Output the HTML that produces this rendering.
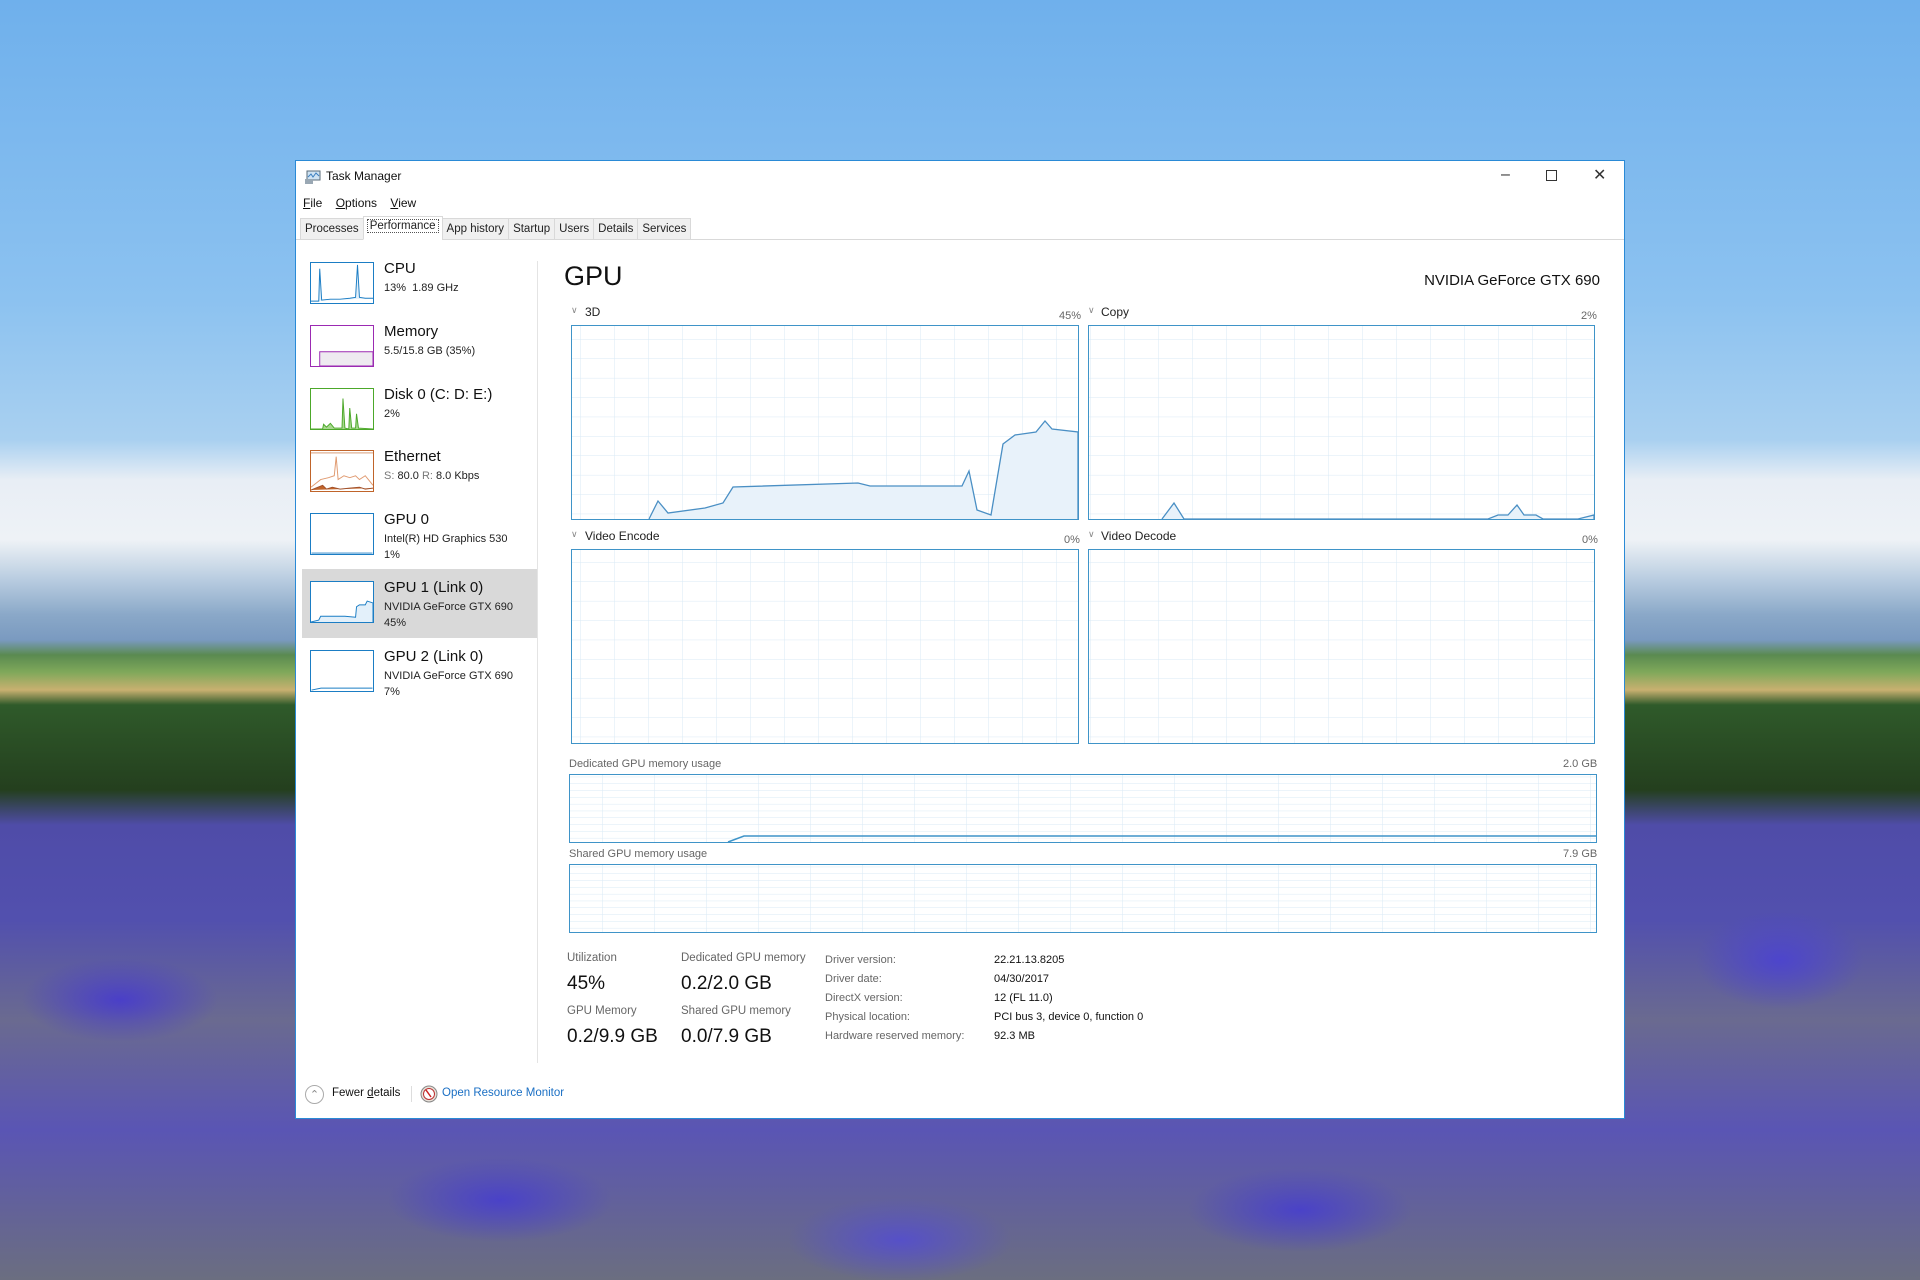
<!DOCTYPE html>
<html><head><meta charset="utf-8"><style>
*{margin:0;padding:0;box-sizing:border-box}
body{width:1920px;height:1280px;overflow:hidden;position:relative;font-family:"Liberation Sans",sans-serif;color:#000;
background:
radial-gradient(ellipse 140px 60px at 120px 1000px,#4a3fc8 0%,transparent 70%),
radial-gradient(ellipse 120px 70px at 1780px 960px,#4d45cc 0%,transparent 70%),
radial-gradient(ellipse 160px 60px at 500px 1200px,#4a42c8 0%,transparent 70%),
radial-gradient(ellipse 160px 60px at 1300px 1210px,#4a42c8 0%,transparent 70%),
radial-gradient(ellipse 160px 60px at 900px 1240px,#5650c8 0%,transparent 70%),
linear-gradient(180deg,#6fb0ec 0px,#8cc2f0 300px,#a9d0f0 440px,#e8eef5 480px,#eef2f6 540px,#b8cce0 580px,#8aa8c8 615px,#7a9ac0 640px,#5a8a50 655px,#7fa85a 672px,#c8b070 690px,#2f5a2a 705px,#243f1e 790px,#4f4ca8 825px,#5250ae 920px,#6a6a90 1020px,#5a55b4 1130px,#6b6e80 1280px);}
.win{position:absolute;left:295px;top:160px;width:1330px;height:959px;background:#fff;border:1px solid #2a8ad6;}
.t{position:absolute;white-space:nowrap}
.tabs{position:absolute;left:4px;top:55px;height:24px;display:flex;font-size:11.5px}
.tab{border:1px solid #d9d9d9;background:#f0f0f0;padding:4px 4px 0;height:22px;margin-top:2px;margin-right:-1px;color:#222}
.tab.sel{background:#fff;height:24px;margin-top:0;border-color:#d9d9d9;border-bottom-color:#fff;padding-top:3px}
.tab.sel span{outline:1px dotted #555;padding:0 2px}
.item{position:absolute;left:10px;width:234px;height:64px}
.thumb{position:absolute;left:4px;top:0;width:64px;height:42px;border:1px solid}
.item .n{position:absolute;left:78px;top:-2px;font-size:15px;color:#111}
.item .d{position:absolute;left:78px;font-size:11px;color:#222;line-height:16px}
.lbl{font-size:12.5px;color:#555}
.sm{font-size:11px;color:#666}
.big{font-size:19px;color:#111}
.info{font-size:11px;color:#666;line-height:19px}
.infov{font-size:11px;color:#111;line-height:19px}
</style></head><body>
<div class="win">
 <svg class="t" style="left:8px;top:8px" width="18" height="16" viewBox="0 0 18 16"><rect x="3" y="2" width="13" height="9" fill="#cfe3f3" stroke="#5a6b7a"/><polyline points="4,8 7,5 9,8 12,4 15,7" fill="none" stroke="#3b7fc0"/><rect x="1" y="10" width="8" height="5" fill="#9aa8b4"/></svg>
 <div class="t" style="left:30px;top:8px;font-size:12px;color:#111">Task Manager</div>
 <div class="t" style="left:1205px;top:5px;font-size:16px;color:#333">&#8211;</div>
 <div class="t" style="left:1250px;top:9px;width:11px;height:11px;border:1px solid #333"></div>
 <div class="t" style="left:1297px;top:4px;font-size:16px;color:#333">&#10005;</div>
 <div class="t" style="left:7px;top:35px;font-size:12px;color:#111"><u>F</u>ile &nbsp;&nbsp;&nbsp;<u>O</u>ptions &nbsp;&nbsp;&nbsp;<u>V</u>iew</div>
 <div class="t" style="left:0;top:78px;width:1328px;height:1px;background:#d9d9d9"></div>
 <div class="tabs">
  <div class="tab">Processes</div><div class="tab sel"><span>Performance</span></div><div class="tab">App history</div><div class="tab">Startup</div><div class="tab">Users</div><div class="tab">Details</div><div class="tab">Services</div>
 </div>
 <div class="t" style="left:6px;top:408px;width:235px;height:69px;background:#d9d9d9"></div>
 <div class="item" style="top:101px">
  <svg class="thumb" style="border-color:#1b7dc4" viewBox="0 0 64 42" preserveAspectRatio="none"><polyline points="0,40 8,40 9,6 11,39 20,38 30,38 40,37 46,36 48,2 50,36 56,37 64,37" fill="#e3f0fa" stroke="#1b7dc4"/></svg>
  <div class="n">CPU</div><div class="d" style="top:18px">13%&nbsp; 1.89 GHz</div></div>
 <div class="item" style="top:164px">
  <svg class="thumb" style="border-color:#9b2ab2" viewBox="0 0 64 42" preserveAspectRatio="none"><polygon points="9,42 9,27 64,27 64,42" fill="#eeeaf0" stroke="#9b2ab2"/></svg>
  <div class="n">Memory</div><div class="d" style="top:18px">5.5/15.8 GB (35%)</div></div>
 <div class="item" style="top:227px">
  <svg class="thumb" style="border-color:#4ca82a" viewBox="0 0 64 42" preserveAspectRatio="none"><polyline points="0,42 12,42 13,37 16,40 20,36 24,41 32,41 33,10 35,41 39,42 40,20 42,41 46,41 47,26 49,41 64,42" fill="#a8d88f" stroke="#4ca82a"/></svg>
  <div class="n">Disk 0 (C: D: E:)</div><div class="d" style="top:18px">2%</div></div>
 <div class="item" style="top:289px">
  <svg class="thumb" style="border-color:#c0642a" viewBox="0 0 64 42" preserveAspectRatio="none"><line x1="0" y1="2" x2="64" y2="2" stroke="#c0642a" stroke-width=".6"/><polyline points="0,38 10,30 18,28 24,26 26,6 28,30 34,26 40,28 46,26 50,30 56,26 64,36" fill="none" stroke="#e09a70"/><polyline points="0,41 12,36 16,40 22,38 30,40 40,39 50,38 56,40 64,39" fill="#c0642a" stroke="#a0502a"/></svg>
  <div class="n">Ethernet</div><div class="d" style="top:18px"><span style="color:#777">S:</span> 80.0 <span style="color:#777">R:</span> 8.0 Kbps</div></div>
 <div class="item" style="top:352px">
  <svg class="thumb" style="border-color:#1b7dc4" viewBox="0 0 64 42"><polyline points="0,41 64,41" stroke="#1b7dc4"/></svg>
  <div class="n">GPU 0</div><div class="d" style="top:18px">Intel(R) HD Graphics 530<br>1%</div></div>
 <div class="item" style="top:420px">
  <svg class="thumb" style="border-color:#1b7dc4;background:#fff" viewBox="0 0 64 42" preserveAspectRatio="none"><polyline points="0,42 8,40 10,36 20,36 35,36 46,37 47,26 50,24 56,24 58,20 64,22 64,42" fill="#e3f0fa" stroke="#1b7dc4"/></svg>
  <div class="n">GPU 1 (Link 0)</div><div class="d" style="top:18px">NVIDIA GeForce GTX 690<br>45%</div></div>
 <div class="item" style="top:489px">
  <svg class="thumb" style="border-color:#1b7dc4" viewBox="0 0 64 42"><polyline points="0,41 10,39 30,39 50,39 64,39" fill="none" stroke="#1b7dc4"/></svg>
  <div class="n">GPU 2 (Link 0)</div><div class="d" style="top:18px">NVIDIA GeForce GTX 690<br>7%</div></div>
 <div class="t" style="left:241px;top:100px;width:1px;height:802px;background:#e4e4e4"></div>

 <div class="t" style="left:268px;top:100px;font-size:27px;color:#111">GPU</div>
 <div class="t" style="right:24px;top:111px;font-size:15px;color:#111">NVIDIA GeForce GTX 690</div>

 <svg class="t" style="left:0;top:0;overflow:visible" width="1328" height="950">
  <defs>
   <pattern id="g" x="274" y="164" width="34" height="19.4" patternUnits="userSpaceOnUse"><path d="M34 0V19.4M0 19.4H34" fill="none" stroke="#d9eaf5" stroke-width="1"/></pattern>
   <pattern id="g2" x="274" y="387" width="34" height="19.4" patternUnits="userSpaceOnUse"><path d="M34 0V19.4M0 19.4H34" fill="none" stroke="#d9eaf5" stroke-width="1"/></pattern>
   <pattern id="m" x="290" y="613" width="52" height="6.8" patternUnits="userSpaceOnUse"><path d="M52 0V6.8M0 6.8H52" fill="none" stroke="#d9eaf5" stroke-width="1"/></pattern>
   <pattern id="m2" x="290" y="703" width="52" height="6.8" patternUnits="userSpaceOnUse"><path d="M52 0V6.8M0 6.8H52" fill="none" stroke="#d9eaf5" stroke-width="1"/></pattern>
  </defs>
  <g transform="translate(-295,-160)">
   <rect x="570.5" y="324.5" width="507" height="194" fill="url(#g)" stroke="#3f94c8"/>
   <rect x="1087.5" y="324.5" width="506" height="194" fill="url(#g)" stroke="#3f94c8"/>
   <rect x="570.5" y="548.5" width="507" height="194" fill="url(#g2)" stroke="#3f94c8"/>
   <rect x="1087.5" y="548.5" width="506" height="194" fill="url(#g2)" stroke="#3f94c8"/>
   <rect x="568.5" y="773.5" width="1027" height="68" fill="url(#m)" stroke="#3f94c8"/>
   <rect x="568.5" y="863.5" width="1027" height="68" fill="url(#m2)" stroke="#3f94c8"/>
   <g transform="translate(570,324)">
    <polyline points="78,194 87,176 97,188 134,183 152,178 162,162 287,158 299,161 391,161 398,146 406,185 420,190 432,119 444,110 465,107 474,96 481,104 507,107 507,194" fill="#e8f2fa" stroke="#4a8fc4" stroke-width="1.3"/>
   </g>
   <g transform="translate(1087,324)">
    <polyline points="74,194 86,178 96,194 400,194 410,190 420,190 429,180 436,190 448,190 455,194 490,194 506,190 506,194" fill="#e8f2fa" stroke="#4a8fc4" stroke-width="1.3"/>
   </g>
   <polyline points="727,841 743,835 1595,835" fill="none" stroke="#3f94c8" stroke-width="1.5"/>
  </g>
 </svg>

 <div class="t" style="left:275px;top:144px;font-size:9px;color:#888">&#8744;</div>
 <div class="t" style="left:289px;top:144px;font-size:12px;color:#222">3D</div>
 <div class="t" style="left:763px;top:145px" ><span class="sm">45%</span></div>
 <div class="t" style="left:792px;top:144px;font-size:9px;color:#888">&#8744;</div>
 <div class="t" style="left:805px;top:144px;font-size:12px;color:#222">Copy</div>
 <div class="t" style="left:1285px;top:145px"><span class="sm">2%</span></div>
 <div class="t" style="left:275px;top:368px;font-size:9px;color:#888">&#8744;</div>
 <div class="t" style="left:289px;top:368px;font-size:12px;color:#222">Video Encode</div>
 <div class="t" style="left:768px;top:369px"><span class="sm">0%</span></div>
 <div class="t" style="left:792px;top:368px;font-size:9px;color:#888">&#8744;</div>
 <div class="t" style="left:805px;top:368px;font-size:12px;color:#222">Video Decode</div>
 <div class="t" style="left:1286px;top:369px"><span class="sm">0%</span></div>
 <div class="t sm" style="left:273px;top:597px">Dedicated GPU memory usage</div>
 <div class="t sm" style="left:1267px;top:597px">2.0 GB</div>
 <div class="t sm" style="left:273px;top:687px">Shared GPU memory usage</div>
 <div class="t sm" style="left:1267px;top:687px">7.9 GB</div>

 <div class="t" style="left:271px;top:791px;font-size:11.5px;color:#666">Utilization</div>
 <div class="t big" style="left:271px;top:812px">45%</div>
 <div class="t" style="left:271px;top:844px;font-size:11.5px;color:#666">GPU Memory</div>
 <div class="t big" style="left:271px;top:865px">0.2/9.9 GB</div>
 <div class="t" style="left:385px;top:791px;font-size:11.5px;color:#666">Dedicated GPU memory</div>
 <div class="t big" style="left:385px;top:812px">0.2/2.0 GB</div>
 <div class="t" style="left:385px;top:844px;font-size:11.5px;color:#666">Shared GPU memory</div>
 <div class="t big" style="left:385px;top:865px">0.0/7.9 GB</div>
 <div class="t info" style="left:529px;top:790px">Driver version:<br>Driver date:<br>DirectX version:<br>Physical location:<br>Hardware reserved memory:</div>
 <div class="t infov" style="left:698px;top:790px">22.21.13.8205<br>04/30/2017<br>12 (FL 11.0)<br>PCI bus 3, device 0, function 0<br>92.3 MB</div>

 <div class="t" style="left:9px;top:924px;width:19px;height:19px;border:1px solid #aaa;border-radius:50%;font-size:11px;color:#888;text-align:center;line-height:18px">&#8963;</div>
 <div class="t" style="left:36px;top:926px;font-size:11.5px;color:#111">Fewer <u>d</u>etails</div>
 <div class="t" style="left:115px;top:925px;width:1px;height:16px;background:#ddd"></div>
 <svg class="t" style="left:124px;top:924px" width="18" height="18" viewBox="0 0 18 18"><circle cx="9" cy="9" r="8" fill="#e8e0d8" stroke="#888"/><circle cx="9" cy="9" r="5.5" fill="#fff" stroke="#b33"/><line x1="6" y1="5" x2="11" y2="12" stroke="#c22" stroke-width="1.5"/></svg>
 <div class="t" style="left:146px;top:926px;font-size:11.5px;color:#1a6fc4">Open Resource Monitor</div>
</div>
</body></html>
